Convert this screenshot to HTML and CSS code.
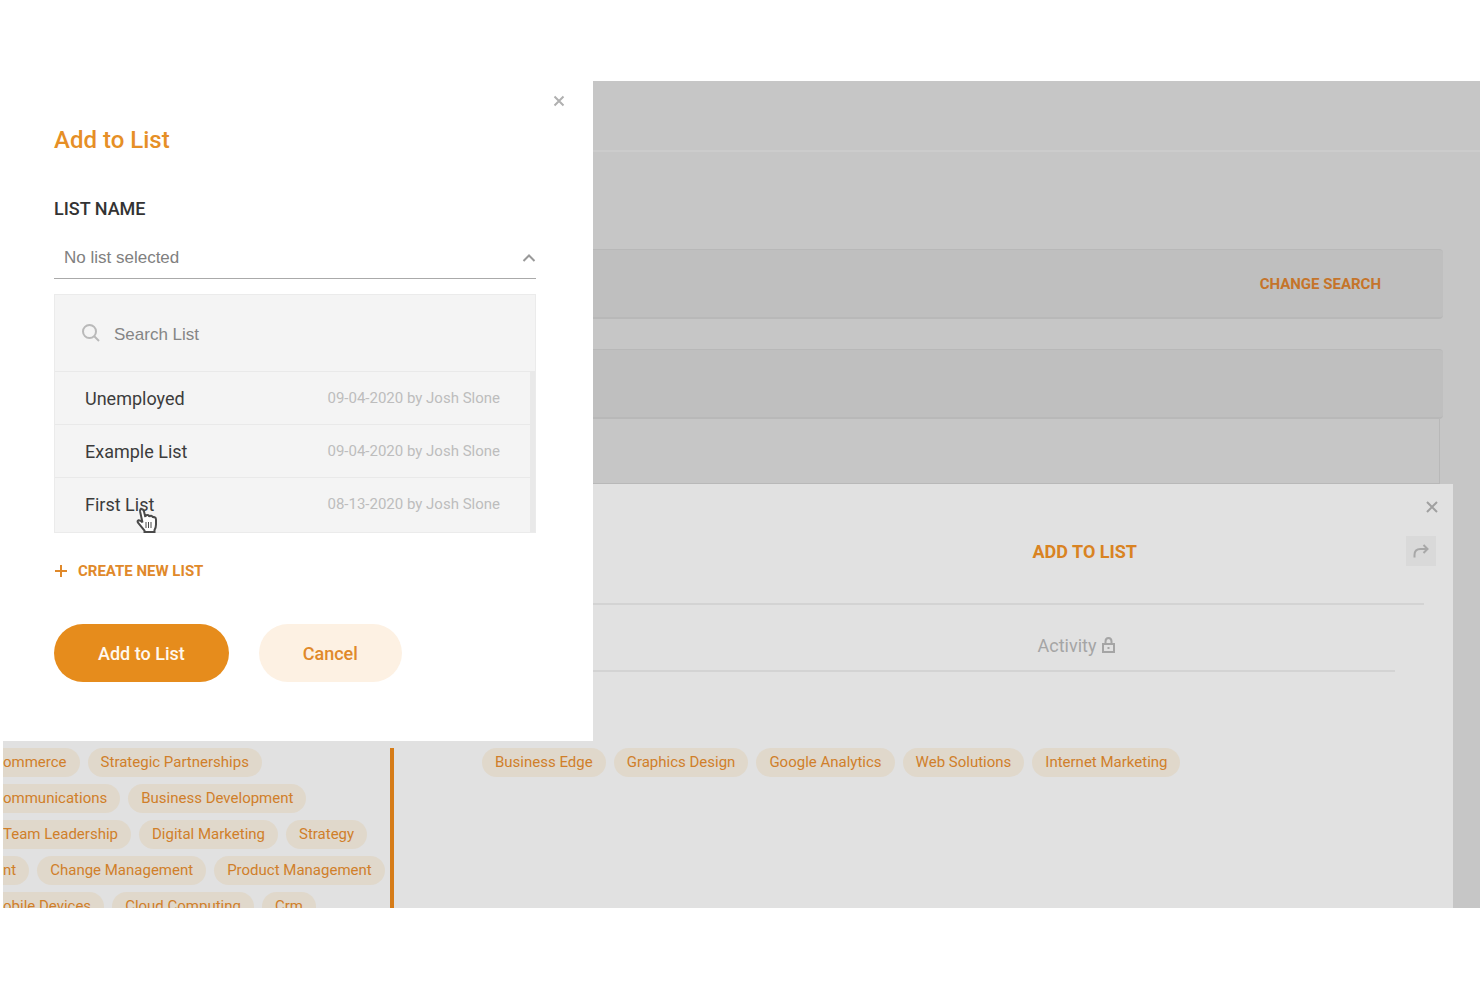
FILE: index.html
```html
<!DOCTYPE html>
<html lang="en">
<head>
  <meta charset="utf-8">
  <meta name="viewport" content="width=device-width, initial-scale=1.0">
  <title>Add to List</title>
  <link rel="stylesheet" href="styles.css">
</head>
<body>
  <div class="app">
    <header class="topbar"></header>

    <main class="results">
      <div class="search-bar">
        <a href="#" class="change-search">CHANGE SEARCH</a>
      </div>
      <div class="search-bar"></div>
      <div class="result-row"></div>
    </main>

    <section class="profile">
      <div class="profile-close">
        <button class="close" aria-label="Close profile">
          <svg width="12" height="12" viewBox="0 0 12 12"><path d="M1 1l10 10M11 1L1 11"/></svg>
        </button>
      </div>
      <div class="profile-header">
        <a href="#" class="add-link">ADD TO LIST</a>
        <button class="share" aria-label="Share">
          <svg width="16" height="16" viewBox="0 0 16 16"><path d="M1.5 14.5V12q0-6 6-6h6.5M10.5 2l4 4-4 4"/></svg>
        </button>
      </div>
      <div class="profile-tabs">
        <button class="tab">Activity
          <svg width="13" height="16" viewBox="0 0 13 16"><path d="M1 7h11v8H1zM3.5 7V4.5q0-3.5 3-3.5t3 3.5V7M6.5 10v2"/></svg>
        </button>
      </div>
      <div class="profile-body">
        <div class="skills">
          <div class="chips"><span class="chip cut">ommerce</span><span class="chip">Strategic Partnerships</span></div>
          <div class="chips"><span class="chip cut">ommunications</span><span class="chip">Business Development</span></div>
          <div class="chips"><span class="chip cut">Team Leadership</span><span class="chip">Digital Marketing</span><span class="chip">Strategy</span></div>
          <div class="chips"><span class="chip cut">nt</span><span class="chip">Change Management</span><span class="chip">Product Management</span></div>
          <div class="chips"><span class="chip cut">obile Devices</span><span class="chip">Cloud Computing</span><span class="chip">Crm</span></div>
        </div>
        <div class="company">
          <div class="chips">
            <span class="chip">Business Edge</span>
            <span class="chip">Graphics Design</span>
            <span class="chip">Google Analytics</span>
            <span class="chip">Web Solutions</span>
            <span class="chip">Internet Marketing</span>
          </div>
        </div>
      </div>
    </section>

    <div class="modal" role="dialog" aria-labelledby="modalTitle">
      <button class="close modal-close" aria-label="Close">
        <svg width="12" height="12" viewBox="0 0 12 12"><path d="M1.5 1.5l9 9M10.5 1.5l-9 9"/></svg>
      </button>
      <h1 id="modalTitle">Add to List</h1>
      <label class="field-label" for="listName">LIST NAME</label>
      <div class="select">
        <select id="listName">
          <option>No list selected</option>
        </select>
        <svg width="14" height="8" viewBox="0 0 14 8"><path d="M1.5 7L7 1.5 12.5 7"/></svg>
      </div>

      <div class="dropdown">
        <div class="search">
          <svg width="18" height="18" viewBox="0 0 18 18"><circle cx="7.5" cy="7.5" r="6.5"/><path d="M12 12l5 5"/></svg>
          <input type="text" placeholder="Search List" aria-label="Search List">
        </div>
        <ul class="lists">
          <li><button><span>Unemployed</span><small>09-04-2020 by Josh Slone</small></button></li>
          <li><button><span>Example List</span><small>09-04-2020 by Josh Slone</small></button></li>
          <li>
            <button><span>First List</span><small>08-13-2020 by Josh Slone</small></button>
            <svg class="pointer" width="23" height="27" viewBox="0 0 23 27"><path d="M7.5 15.5L5.2 5Q4.7 2 6.5 2t2.5 2.500l1.300 5.500q0-2 2-2t2 2q.3-1.500 1.900-1.300t1.600 2.100q.5-1 1.900-.5t1.300 2.300v4.900q0 3-1.500 5.500v2H9.500v-1.500L3.200 16q-1.500-2 .5-2.800Q5.500 13 7.500 15.500z"/><path class="fingers" d="M11 15v6M13.500 15v6M16 15v6"/></svg>
          </li>
        </ul>
      </div>

      <button class="create">
        <svg width="14" height="14" viewBox="0 0 14 14"><path d="M7 1v12M1 7h12"/></svg>
        CREATE NEW LIST
      </button>

      <div class="actions">
        <button class="btn btn-primary">Add to List</button>
        <button class="btn btn-light">Cancel</button>
      </div>
    </div>
  </div>
</body>
</html>
```
FILE: styles.css
```css
* {
  box-sizing: border-box;
}

body {
  margin: 0;
  padding: 81px 0 79px 3px;
  font-family: Roboto, "Noto Sans", sans-serif;
  background-color: #fff;
}

button {
  padding: 0;
  border: none;
  background: none;
  font-family: inherit;
  cursor: pointer;
}

a {
  text-decoration: none;
}

svg {
  fill: none;
  stroke: currentColor;
  stroke-width: 2;
  flex: none;
}

.app {
  position: relative;
  display: flex;
  flex-direction: column;
  min-height: 827px;
  background-color: #c6c6c6;
}

.topbar {
  height: 71px;
  border-bottom: 2px solid #cccccc;
}

/* Search results behind the dialog */
.results {
  padding: 97px 37px 0 0;
}

.search-bar {
  display: flex;
  align-items: center;
  justify-content: flex-end;
  height: 70px;
  padding-right: 62px;
  border-top: 1px solid #b8b8b8;
  border-bottom: 2px solid #b8b8b8;
  border-radius: 0 4px 4px 0;
  background-color: #bfbfbf;
}

.search-bar + .search-bar {
  margin-top: 30px;
}

.change-search {
  font-size: 15px;
  font-weight: 700;
  color: #c5742a;
}

.result-row {
  height: 65px;
  margin-right: 3px;
  border-right: 1px solid #b8b8b8;
  border-bottom: 1px solid #b8b8b8;
}

/* Profile panel */
.profile {
  flex: 1;
  margin-right: 27px;
  background-color: #e1e1e1;
}

.profile-close {
  display: flex;
  justify-content: flex-end;
  height: 47px;
  padding: 17px 15px 0 0;
}

.close {
  width: 12px;
  height: 12px;
  color: #a0a0a0;
}

.close svg {
  display: block;
}

.profile-header {
  display: grid;
  grid-template-columns: 71% 1fr auto;
  align-items: center;
  height: 40px;
}

.add-link {
  grid-column: 2;
  font-size: 18px;
  font-weight: 700;
  color: #d98322;
}

.share {
  width: 30px;
  height: 30px;
  margin-right: 17px;
  background-color: #d9d9d9;
  color: #a8a8a8;
}

.share svg {
  display: block;
  margin: 0 auto;
}

.profile-tabs {
  display: grid;
  grid-template-columns: 71% 1fr;
  height: 69px;
  margin: 32px 0 76px;
  position: relative;
}

.profile-tabs::before,
.profile-tabs::after {
  content: "";
  position: absolute;
  left: 0;
  height: 2px;
  background-color: #d3d3d3;
}

.profile-tabs::before {
  top: 0;
  right: 29px;
}

.profile-tabs::after {
  bottom: 0;
  right: 58px;
}

.tab {
  grid-column: 2;
  justify-self: start;
  display: flex;
  align-items: center;
  gap: 6px;
  padding: 16px 5px 0;
  height: 68px;
  font-size: 18px;
  color: #a5a5a5;
}

.profile-body {
  display: flex;
  height: 160px;
}

.skills {
  flex: none;
  width: 387px;
  overflow: hidden;
}

.company {
  flex: 1;
  padding-left: 88px;
  border-left: 4px solid #d67c18;
}

.chips {
  display: flex;
  gap: 8px;
  margin-bottom: 7px;
}

.chip {
  flex: none;
  height: 29px;
  padding: 0 13px;
  border-radius: 15px;
  background-color: #e0d8cb;
  color: #d07f2a;
  font-size: 15px;
  line-height: 29px;
}

.chip.cut {
  padding-left: 0;
  border-radius: 0 15px 15px 0;
}

/* Add to List dialog */
.modal {
  position: absolute;
  top: 0;
  left: 0;
  width: 590px;
  height: 660px;
  padding: 44px 57px 0 51px;
  background-color: #fff;
}

.modal-close {
  position: absolute;
  top: 14px;
  right: 28px;
  color: #b0b0b0;
}

.modal h1 {
  margin: 0 0 36px;
  font-size: 24px;
  font-weight: 500;
  line-height: 30px;
  color: #e68f26;
}

.field-label {
  display: block;
  font-size: 18px;
  font-weight: 500;
  line-height: 36px;
  color: #333;
}

.select {
  position: relative;
  margin-top: 10px;
}

.select select {
  display: block;
  width: 100%;
  height: 42px;
  padding: 0 10px;
  border: none;
  border-bottom: 1px solid #aaa;
  border-radius: 0;
  appearance: none;
  background: none;
  font-family: "Liberation Sans", Arial, sans-serif;
  font-size: 17px;
  color: #808080;
}

.select svg {
  position: absolute;
  top: 17px;
  right: 0;
  color: #999;
  pointer-events: none;
}

.dropdown {
  margin-top: 15px;
  border: 1px solid #ebebeb;
  background-color: #f4f4f4;
}

.search {
  display: flex;
  align-items: center;
  gap: 14px;
  height: 76px;
  padding: 0 27px;
}

.search svg {
  color: #b9b9b9;
}

.search input {
  flex: 1;
  padding: 3px 0 0;
  border: none;
  background: none;
  font-family: "Liberation Sans", Arial, sans-serif;
  font-size: 17px;
}

.search input::placeholder {
  color: #858585;
}

.lists {
  margin: 0;
  padding: 0 0 2px;
  list-style: none;
  border-right: 5px solid #e9e9e9;
}

.lists li {
  position: relative;
  border-top: 1px solid #e9e9e9;
}

.lists button {
  display: flex;
  align-items: center;
  justify-content: space-between;
  width: 100%;
  height: 52px;
  padding: 0 30px;
}

.lists span {
  font-size: 18px;
  color: #3c3c3c;
}

.lists small {
  font-size: 15px;
  color: #bdbdbd;
}

.pointer {
  position: absolute;
  top: 29px;
  left: 80px;
  color: #4a4a4a;
  fill: #fff;
}

.fingers {
  stroke-width: 1;
}

.create {
  display: flex;
  align-items: center;
  gap: 10px;
  height: 36px;
  margin-top: 20px;
  font-size: 15px;
  font-weight: 700;
  color: #e0892a;
}

.actions {
  display: flex;
  gap: 30px;
  margin-top: 35px;
}

.btn {
  height: 58px;
  padding: 0 44px;
  border-radius: 29px;
  font-size: 18px;
  font-weight: 500;
}

.btn-primary {
  background-color: #e68c1c;
  color: #fff8ee;
}

.btn-light {
  background-color: #fdf1e3;
  color: #e0892a;
}
```
